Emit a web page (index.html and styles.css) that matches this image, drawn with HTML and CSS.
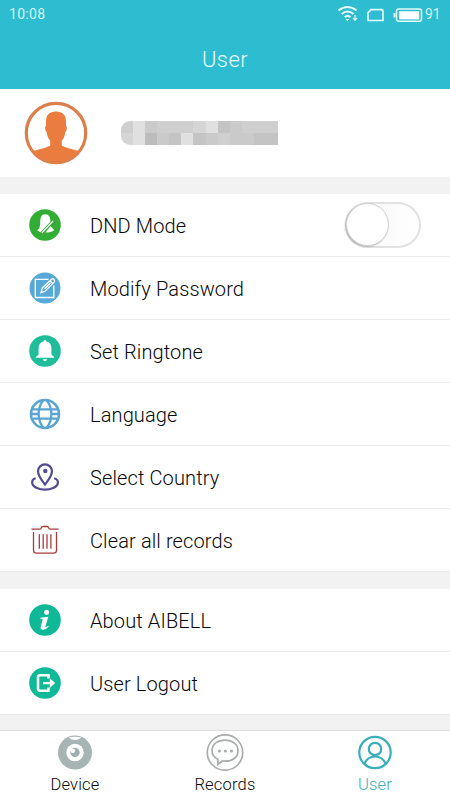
FILE: index.html
```html
<!DOCTYPE html>
<html lang="en">
<head>
<meta charset="utf-8">
<title>User</title>
<link rel="stylesheet" href="styles.css">
</head>
<body>
<div class="app">
  <header class="header">
    <div class="status">
      <span class="time">10:08</span>
      <svg class="status-icons" width="86" height="20" viewBox="0 0 86 20" fill="none" stroke="#e4fafa">
        <path d="M1.500 8.500Q10.500 1.500 19.500 8.500M4.700 12Q10.500 7 16.500 12M7.700 15.300Q10.700 12.500 13.500 15.300" stroke-width="2"/>
        <path d="M8.500 17h4l-2 2.200z" fill="#e4fafa" stroke="none"/>
        <path d="M18 13v5M16 16l2 2.300l2-2.300" stroke-width="1.200"/>
        <path d="M34 7.700h10.500a1.500 1.500 0 0 1 1.500 1.500v9.300h-15v-7.800z" stroke-width="1.700"/>
        <rect x="59.500" y="7" width="25" height="12.300" rx="2" stroke-width="1.500"/>
        <path d="M62 9.200h20.200v8.200h-20.200z" fill="#fff" stroke="none"/>
        <path d="M57.500 11v4.500" stroke-width="2"/>
      </svg>
      <span class="battery">91</span>
    </div>
    <h1 class="title">User</h1>
  </header>

  <section class="profile">
    <svg class="avatar" width="64" height="64" viewBox="0 0 64 64">
      <circle cx="32" cy="32" r="29.700" fill="#fff" stroke="#dc7f4d" stroke-width="3.200"/>
      <path d="M32 10.500c7 0 10.300 4 10 11v3.500c1.400.3 1.100 5-.8 6.500-.5 4-1.700 6.500-3.400 8v5c3 2.500 11 3.300 17.200 5.800A30.500 30.500 0 0 1 9 50.300c6.200-2.500 14.200-3.300 17.200-5.800v-5c-1.700-1.500-2.900-4-3.400-8-1.900-1.500-2.200-6.200-.8-6.500v-3.500c-.3-7 3-11 10-11z" fill="#e97c3e"/>
    </svg>
    <div class="mosaic">
      <i class="c2"></i><i class="c0"></i><i class="c3"></i><i class="c2"></i><i class="c2"></i><i class="c2"></i><i class="c1"></i><i class="c0"></i><i class="c4"></i><i class="c3"></i><i class="c2"></i><i class="c2"></i><i class="c2"></i>
      <i class="c1"></i><i class="c0"></i><i class="c5"></i><i class="c3"></i><i class="c4"></i><i class="c0"></i><i class="c4"></i><i class="c3"></i><i class="c2"></i><i class="c3"></i><i class="c3"></i><i class="c4"></i><i class="c4"></i>
    </div>
  </section>

  <ul class="list">
    <li class="row">
      <svg class="icon" width="34" height="34" viewBox="0 0 34 34">
        <circle cx="17" cy="17" r="15.800" fill="#33ad36"/>
        <path d="M17 6.300c4.300 0 5.500 3.500 5.300 7.500L12.500 24.200l-3.300-2c2.700-2 3-4.200 3-8.200 0-4.300 1.300-7.700 4.800-7.700z" fill="#fff"/>
        <path d="M22.500 18l3.700 4.200q-3 2.300-8.700 2.300z" fill="#fff"/>
        <path d="M25.300 13.200L14 25.200" stroke="#33ad36" stroke-width="2.600" fill="none"/>
        <path d="M25 13L13.800 25" stroke="#fff" stroke-width="1.200" fill="none"/>
      </svg>
      <span class="label">DND Mode</span>
      <span class="switch"><span class="knob"></span></span>
    </li>
    <li class="row">
      <svg class="icon" width="34" height="34" viewBox="0 0 34 34" fill="none" stroke="#fff">
        <circle cx="17" cy="17" r="15.500" fill="#58a9d8" stroke="none"/>
        <path d="M20.500 8.300H7.300v18.200h18.500v-12" stroke-width="1.300"/>
        <path d="M13 21.700l1.200-4.700L23.500 8.200q1.300-1 2.500.2t.2 2.800L17 20.300zM22 9.800l2.900 3M16.500 17.700l6-5.700" stroke-width="1.250"/>
      </svg>
      <span class="label">Modify Password</span>
    </li>
    <li class="row">
      <svg class="icon" width="34" height="34" viewBox="0 0 34 34" fill="#fff">
        <circle cx="17" cy="17" r="15.800" fill="#1fbd99"/>
        <path d="M17 6c.9 0 1.200.7 1.400 1.400 3.300.7 5 3.300 5 6.700v5.500c0 2.500 2.800 2.200 2.800 4.200H7.800c0-2 2.800-1.700 2.800-4.200v-5.500c0-3.400 1.700-6 5-6.700.2-.7.500-1.400 1.400-1.400zM14.800 25.200h4.400q-.4 1.800-2.200 1.800t-2.200-1.800z"/>
      </svg>
      <span class="label">Set Ringtone</span>
    </li>
    <li class="row">
      <svg class="icon" width="34" height="34" viewBox="0 0 34 34" fill="none" stroke="#5aa5d2" stroke-width="2.600">
        <circle cx="17" cy="17" r="14"/>
        <path d="M15.500 3C9 11 9 23 15.500 31M18.500 3c6.500 8 6.500 20 0 28M3 17h8M23 17h8M5 12.300h24M5 21.700h24" stroke-width="2.300"/>
      </svg>
      <span class="label">Language</span>
    </li>
    <li class="row">
      <svg class="icon" width="34" height="34" viewBox="0 0 34 34" fill="none" stroke="#544c91" stroke-width="2.200">
        <path d="M17 24.500c-3.500-4.500-7-8.500-7-13.200a7 7 0 0 1 14 0c0 4.700-3.500 8.700-7 13.200z"/>
        <circle cx="17.300" cy="11" r="2.200" fill="#544c91" stroke="none"/>
        <path d="M7.700 18.200C4.500 19 4 21 4.200 23c.6 4.500 7.500 6.700 12.800 6.700S29.300 27.500 29.900 23c.2-2-.8-4-3.700-4.800"/>
      </svg>
      <span class="label">Select Country</span>
    </li>
    <li class="row">
      <svg class="icon" width="34" height="34" viewBox="0 0 34 34" fill="none" stroke="#aa3c3c" stroke-width="1.300">
        <path d="M3.500 6.200h8.200q1.300 0 1.600-1.400.4-1.300 1.700-1.300h4q1.300 0 1.700 1.300.3 1.400 1.600 1.400h8.400"/>
        <path d="M5.500 9v18.300q0 2.900 3 2.900h17q3 0 3-2.900V9M11.300 11.300v14.500M15.200 11.300v14.500M19 11.300v14.500M22.900 11.300v14.500"/>
      </svg>
      <span class="label">Clear all records</span>
    </li>
  </ul>

  <ul class="list">
    <li class="row">
      <svg class="icon" width="34" height="34" viewBox="0 0 34 34" fill="#fff">
        <circle cx="17" cy="17" r="15.800" fill="#0fb997"/>
        <circle cx="18.600" cy="9.200" r="2.500"/>
        <path d="M12.300 14.800l8-1-2.900 9.800c-.3 1.200.8.800 2.700-.8l.6.700c-2.500 2.800-4.700 3.500-6.500 3.200-2-.4-1.800-2-1.300-3.600l1.600-6.200c.3-1-.2-1.200-2.200-1.200z"/>
      </svg>
      <span class="label">About AIBELL</span>
    </li>
    <li class="row">
      <svg class="icon" width="34" height="34" viewBox="0 0 34 34" fill="none" stroke="#fff">
        <circle cx="17" cy="17" r="15.800" fill="#0fb997" stroke="none"/>
        <path d="M20.500 12.500v-3.200H12q-2 0-2 2v11.500q0 2 2 2h8.500v-3.200" stroke-width="2.500"/>
        <path d="M15 15.900h6.800v-3.600l5.400 4.800-5.400 4.800v-3.600H15z" fill="#fff" stroke="none"/>
      </svg>
      <span class="label">User Logout</span>
    </li>
  </ul>

  <nav class="tabs">
    <div class="tab">
      <svg width="38" height="38" viewBox="0 0 38 38">
        <circle cx="19" cy="19.500" r="17" fill="#a7b4b4"/>
        <path d="M12.500 4.500q6.500-1.700 13 0-3 2.500-6.500 2.500t-6.500-2.500z" fill="#fff"/>
        <circle cx="19" cy="19.500" r="8.700" fill="#fff"/>
        <circle cx="19" cy="19.500" r="4.700" fill="#a0afaf"/>
        <circle cx="16.800" cy="17.700" r="2.200" fill="#fff"/>
      </svg>
      <span>Device</span>
    </div>
    <div class="tab">
      <svg width="38" height="38" viewBox="0 0 38 38" fill="none" stroke="#a9adac" stroke-width="1.700">
        <circle cx="19" cy="19.500" r="17.700"/>
        <path d="M11.800 31.500v-5.200C8 24.200 6 21.200 6 17.700 6 11 11.700 7.200 19 7.200s13 3.800 13 10.500S26.500 28.200 19 28.200q-1.500 0-2.700-.2z"/>
        <g fill="#a9adac" stroke="none"><circle cx="13.300" cy="18" r="1.600"/><circle cx="19.300" cy="18" r="1.600"/><circle cx="25.500" cy="18" r="1.600"/></g>
      </svg>
      <span>Records</span>
    </div>
    <div class="tab active">
      <svg width="38" height="38" viewBox="0 0 38 38" fill="none" stroke="#3aaebb" stroke-width="2.200">
        <circle cx="19" cy="19.500" r="15.700"/>
        <circle cx="19" cy="16" r="6.200"/>
        <path d="M8.300 30.700C10.500 26 14.500 23.500 19 23.500s8.500 2.500 10.700 7.200"/>
      </svg>
      <span>User</span>
    </div>
  </nav>
</div>
</body>
</html>
```
FILE: styles.css
```css
* { box-sizing: border-box; }
body { margin: 0; font-family: Roboto, "Liberation Sans", sans-serif; color: #080808; }
.app { width: 450px; height: 800px; display: flex; flex-direction: column; background: #f2f2f2; overflow: hidden; }
.header { height: 89px; background: #2dbcd0; flex: none; }
.status { height: 28px; display: flex; align-items: center; padding: 0 9px 0 9px; font-size: 14px; line-height: 28px; color: #d5f7f8; }
.time { letter-spacing: .3px; }
.status-icons { margin: -5px 2px 0 auto; }
.battery { width: 16px; }
.title { margin: 17px 0 0; text-align: center; font-size: 22px; line-height: 30px; font-weight: 300; letter-spacing: .4px; color: #e8fcfc; }
.profile { height: 88px; flex: none; background: #fff; display: flex; align-items: center; padding-left: 24px; }
.avatar { margin-right: 33px; margin-top: -1px; }
.mosaic { width: 157px; height: 24px; display: grid; grid-template-columns: repeat(13, 1fr); grid-template-rows: 12px 12px; overflow: hidden; border-radius: 9px 0 0 9px; }
.c0 { background: #e0e0e0; }
.c1 { background: #d5d5d5; }
.c2 { background: #cfcfcf; }
.c3 { background: #cacaca; }
.c4 { background: #c4c4c4; }
.c5 { background: #bcbcbc; }
.list { list-style: none; margin: 17px 0 0; padding: 0; background: #fff; flex: none; }
.row { height: 63px; display: flex; align-items: center; padding: 0 29px 0 28px; border-bottom: 1px solid #ebebeb; }
.icon { flex: none; margin-right: 28px; }
.label { flex: 1; font-size: 20px; font-weight: 300; letter-spacing: .12px; line-height: 30px; padding-top: 2px; }
.switch { width: 76px; height: 46px; border-radius: 23px; border: 2px solid #e2e2e2; background: linear-gradient(90deg, #f5f5f5, #fff); }
.knob { display: block; width: 43px; height: 43px; margin: -1px 0 0 -1px; border-radius: 50%; background: #fff; border: 1px solid #d0d0d0; box-shadow: -1px 1px 2px rgba(0,0,0,.22); }
.tabs { height: 70px; margin-top: auto; flex: none; display: grid; grid-template-columns: repeat(3, 1fr); background: #fff; border-top: 1px solid #dcdcdc; }
.tab { display: flex; flex-direction: column; align-items: center; font-size: 16.5px; line-height: 20px; font-weight: 300; letter-spacing: .2px; padding-top: 2px; }
.tab span { margin-top: 4px; }
.active { color: #3aaebb; }
```
